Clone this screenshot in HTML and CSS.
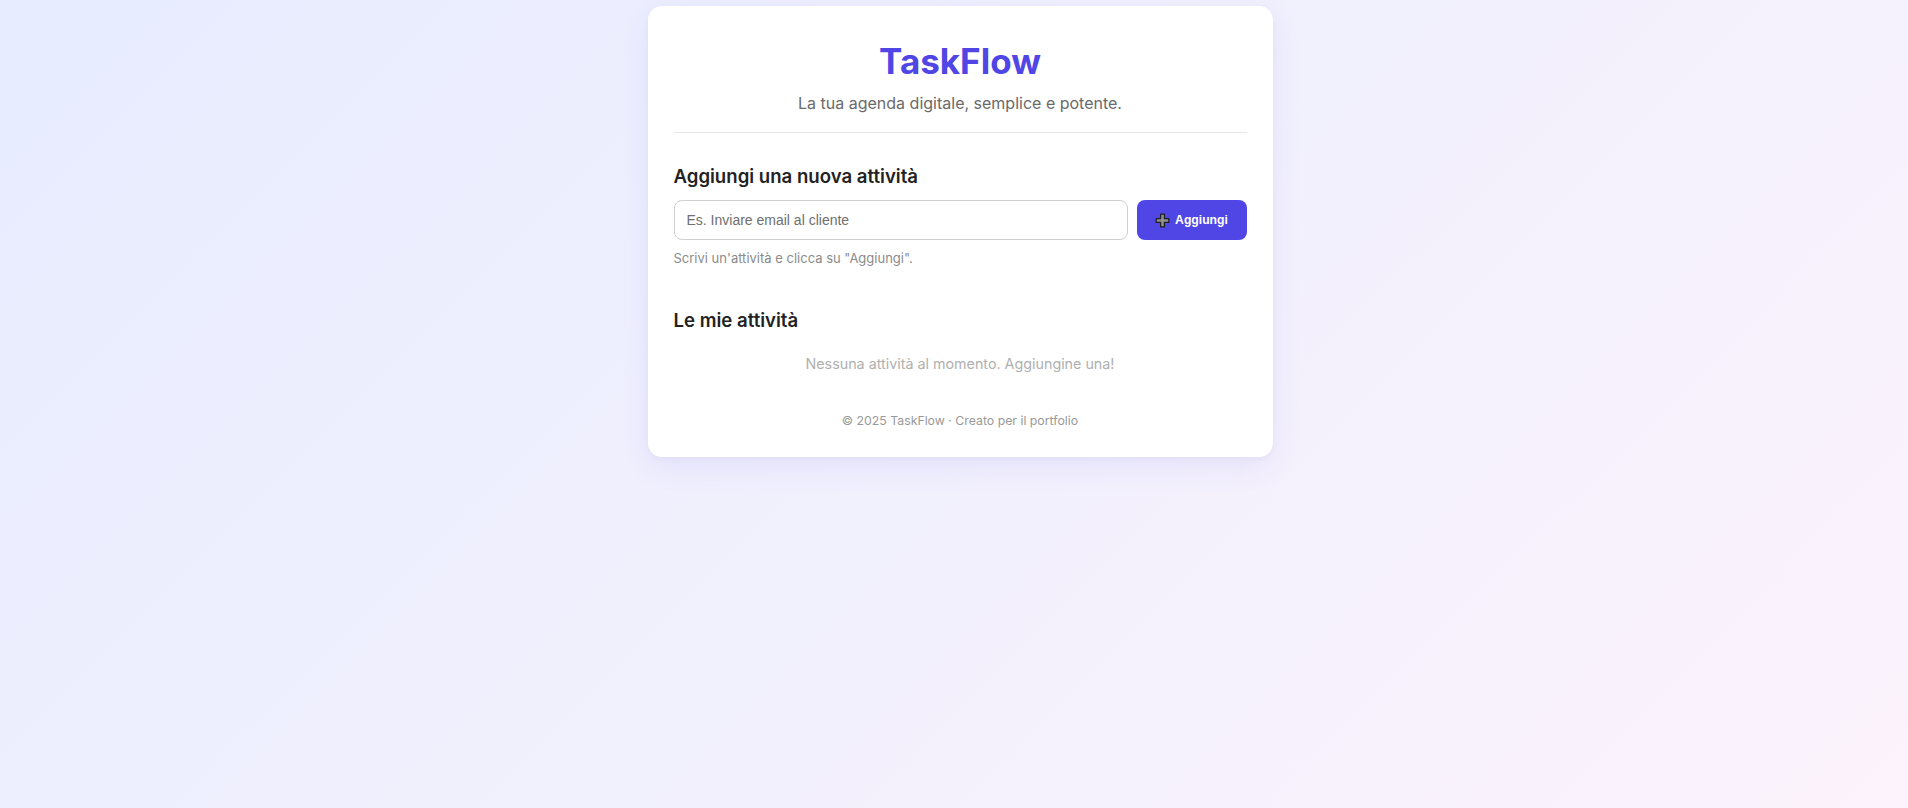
FILE: index.html
```html
<!DOCTYPE html>
<html lang="it">
<head>
<meta charset="utf-8">
<title>TaskFlow</title>
<link rel="stylesheet" href="styles.css">
</head>
<body>
<main class="card">
  <header class="header">
    <h1 class="title">TaskFlow</h1>
    <p class="subtitle">La tua agenda digitale, semplice e potente.</p>
  </header>

  <section class="section-add">
    <h2 class="section-title">Aggiungi una nuova attività</h2>
    <div class="add-row">
      <input class="task-input" type="text" placeholder="Es. Inviare email al cliente">
      <button class="add-btn" type="button">
        <svg class="plus-icon" width="15" height="15" viewBox="0 0 15 15" aria-hidden="true">
          <path d="M5.6 1.2h3.8v4.4h4.4v3.8H9.4v4.4H5.6V9.4H1.2V5.6h4.4z" fill="#8e8e8e" stroke="#1e1e1e" stroke-width="1.2" stroke-linejoin="round"/>
        </svg>
        <span>Aggiungi</span>
      </button>
    </div>
    <p class="hint">Scrivi un'attività e clicca su "Aggiungi".</p>
  </section>

  <section class="section-list">
    <h2 class="section-title">Le mie attività</h2>
    <p class="empty">Nessuna attività al momento. Aggiungine una!</p>
  </section>

  <footer class="footer">© 2025 TaskFlow · Creato per il portfolio</footer>
</main>
</body>
</html>
```

FILE: styles.css
```css
* { box-sizing: border-box; }

html, body { height: 100%; }

body {
  margin: 0;
  padding: 6px 0 0 12px;
  font-family: Inter, "Noto Sans", sans-serif;
  background: linear-gradient(135deg, #e7ecff 0%, #f1f0fd 50%, #fcf3fc 100%);
  min-height: 808px;
}

.card {
  width: 625px;
  margin: 0 auto;
  background: #ffffff;
  border-radius: 14px;
  padding: 34px 26px 27px;
  box-shadow: 0 10px 30px rgba(79, 70, 229, 0.08), 0 2px 6px rgba(0, 0, 0, 0.03);
}

.header {
  text-align: center;
  padding-bottom: 17px;
  border-bottom: 1px solid #e5e7eb;
}

.title {
  margin: 0;
  font-size: 35px;
  line-height: 42px;
  font-weight: 700;
  color: #4f46e5;
}

.subtitle {
  margin: 9px 0 0;
  font-size: 16px;
  line-height: 24px;
  color: #6a6a6a;
}

.section-add { margin-top: 32px; }

.section-title {
  margin: 0;
  font-size: 18.6px;
  line-height: 23px;
  font-weight: 600;
  color: #222222;
}

.add-row {
  display: flex;
  gap: 9px;
  margin-top: 12px;
}

.task-input {
  flex: 1;
  height: 40px;
  padding: 0 12px;
  border: 1px solid #cfcfcf;
  border-radius: 8px;
  font-family: "Liberation Sans", Arial, sans-serif;
  font-size: 14px;
  color: #333;
  outline: none;
}

.task-input::placeholder { color: #6f6f6f; }

.add-btn {
  flex: none;
  width: 110px;
  height: 40px;
  display: flex;
  align-items: center;
  justify-content: center;
  gap: 5px;
  border: none;
  border-radius: 8px;
  background: #4f46e5;
  color: #ffffff;
  font-family: "Liberation Sans", Arial, sans-serif;
  font-weight: 700;
  font-size: 12.2px;
  padding: 0;
}

.plus-icon { display: block; }

.hint {
  margin: 9px 0 0;
  font-size: 13px;
  line-height: 18px;
  color: #8b8b8b;
}

.section-list { margin-top: 42px; }

.empty {
  margin: 21px 0 0;
  text-align: center;
  font-size: 14.3px;
  line-height: 22px;
  color: #b0b0b0;
}

.footer {
  margin-top: 37px;
  text-align: center;
  font-size: 12.3px;
  line-height: 18px;
  color: #999999;
}
```
